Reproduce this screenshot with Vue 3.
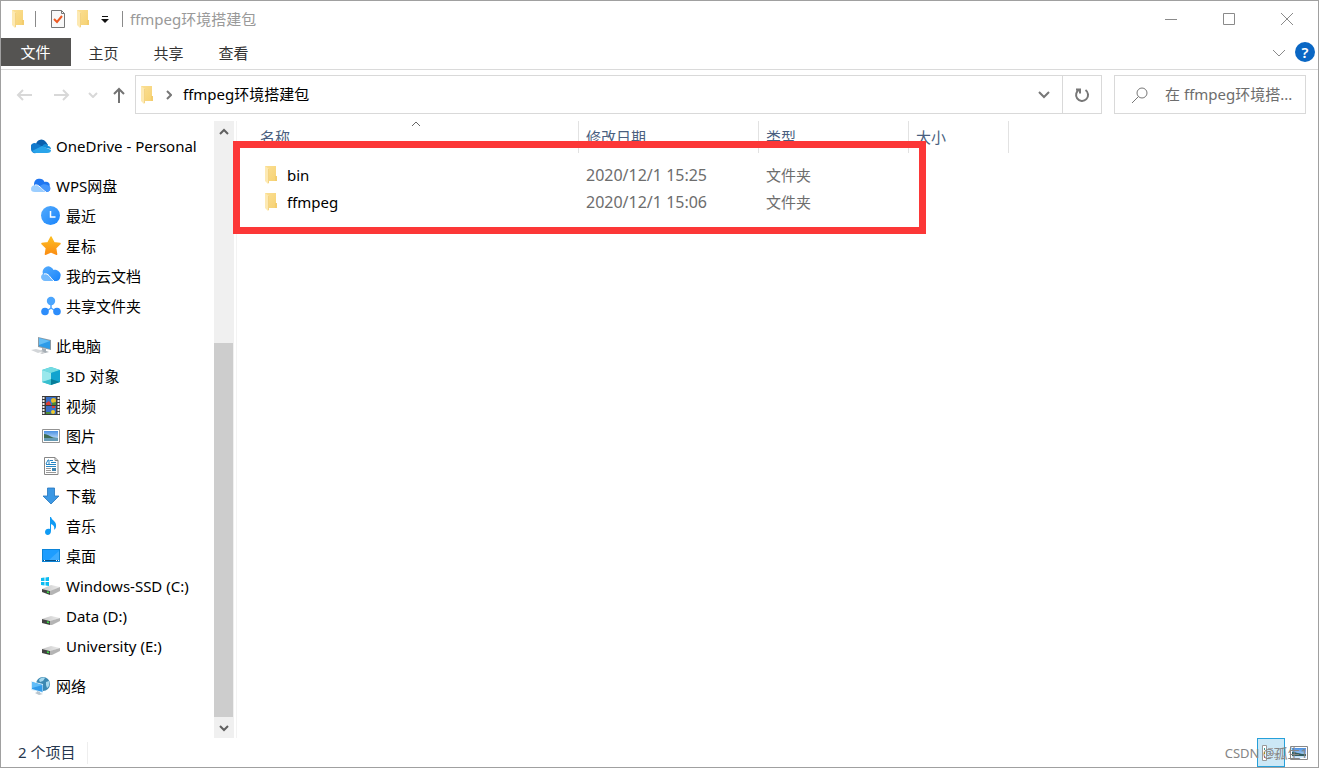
<script setup>
import { ref } from 'vue'

const folder = 'ffmpeg环境搭建包'
const search = ref('')

const tabs = ['主页', '共享', '查看']

const tree = [
  [{ icon: 'onedrive', label: 'OneDrive - Personal' }],
  [
    { icon: 'wps', label: 'WPS网盘' },
    { icon: 'recent', label: '最近', child: true },
    { icon: 'star', label: '星标', child: true },
    { icon: 'cloud', label: '我的云文档', child: true },
    { icon: 'share', label: '共享文件夹', child: true },
  ],
  [
    { icon: 'computer', label: '此电脑' },
    { icon: 'cube', label: '3D 对象', child: true },
    { icon: 'film', label: '视频', child: true },
    { icon: 'picture', label: '图片', child: true },
    { icon: 'document', label: '文档', child: true },
    { icon: 'download', label: '下载', child: true },
    { icon: 'music', label: '音乐', child: true },
    { icon: 'desktop', label: '桌面', child: true },
    { icon: 'system-drive', label: 'Windows-SSD (C:)', child: true },
    { icon: 'drive', label: 'Data (D:)', child: true },
    { icon: 'drive', label: 'University (E:)', child: true },
  ],
  [{ icon: 'network', label: '网络' }],
]

const files = [
  { name: 'bin', date: '2020/12/1 15:25', type: '文件夹' },
  { name: 'ffmpeg', date: '2020/12/1 15:06', type: '文件夹' },
]
</script>

<template>
  <div class="window">
    <svg class="sprite" aria-hidden="true">
      <defs>
        <linearGradient id="gFolder" x1="0" y1="0" x2="1" y2="1">
          <stop offset="0" stop-color="#fbdf94" /><stop offset="1" stop-color="#f6d274" />
        </linearGradient>
        <linearGradient id="gBlue" x1="0" y1="0" x2="1" y2="1">
          <stop offset="0" stop-color="#55acfd" /><stop offset="1" stop-color="#1783fb" />
        </linearGradient>
        <linearGradient id="gStar" x1="0" y1="0" x2="0" y2="1">
          <stop offset="0" stop-color="#fdbd21" /><stop offset="1" stop-color="#fb8e13" />
        </linearGradient>
        <linearGradient id="gSky" x1="0" y1="0" x2="0" y2="1">
          <stop offset="0" stop-color="#4a90e2" /><stop offset="1" stop-color="#dcefff" />
        </linearGradient>
        <linearGradient id="gDrive" x1="0" y1="0" x2="1" y2="0">
          <stop offset="0" stop-color="#c6c6c6" /><stop offset="1" stop-color="#ececec" />
        </linearGradient>
      </defs>
      <symbol id="folder" viewBox="0 0 14 18">
        <path d="M1 0h11v15H1z" fill="url(#gFolder)" />
        <path d="M11 10h2v5h-2z" fill="#f3cd6e" />
        <path d="M1 0l4 3v14l-1 1-3-3z" fill="#fde9b2" />
        <path d="M4.500 3v14" stroke="#f3d384" stroke-width="1" />
      </symbol>
      <symbol id="onedrive" viewBox="0 0 20 20">
        <path d="M5 8a5.500 5.500 0 0 1 10-2l2 3-9 4-5-4z" fill="#0a5fae" />
        <path d="M0 13a4 4 0 0 1 6-5c2 0 3 1 4 2l5 3-10 4a4 4 0 0 1-5-4z" fill="#1179cc" />
        <path d="M12 9c2-2 5-1 5 1 2 0 3 2 3 3l-9-2z" fill="#168dd9" />
        <path d="M1 15l10-5 9 4c0 2-1 3-4 3H5c-2 0-3-1-4-2z" fill="#29a4ea" />
      </symbol>
      <symbol id="wps" viewBox="0 0 20 20">
        <path d="M3 8a5.500 5.500 0 0 1 10.500-2c4-1 6 2 5 4 2 3 0 6-3 6H5z" fill="#1f76f1" />
        <path d="M9 10c3-3 8-2 10 1 1 3-1 5-4 5h-3z" fill="#4797fc" />
        <path d="M0 13c0-4 5-5 8-3l6 6H4c-3 0-4-1-4-3z" fill="#9cceff" />
        <path d="M4 9c4-1 6 4 11 7" fill="none" stroke="#fff" />
      </symbol>
      <symbol id="recent" viewBox="0 0 20 20">
        <circle cx="9.500" cy="9.500" r="9.500" fill="url(#gBlue)" />
        <path d="M9.500 5v6h5" fill="none" stroke="#fff" stroke-width="1.500" />
      </symbol>
      <symbol id="star" viewBox="0 0 20 20">
        <path d="M10 1l2.900 5.700 6.100.9-4.400 4.400 1 6.300-5.600-2.600-5.600 2.600 1-6.300L1 7.600l6.100-.9z" fill="url(#gStar)" stroke="url(#gStar)" stroke-linejoin="round" stroke-width="1.500" />
      </symbol>
      <symbol id="cloud" viewBox="0 0 20 20">
        <path d="M2 8a5.500 5.500 0 0 1 10.500-4c4-1 8 3 7 6-.5 4-2 5-5 5H6z" fill="url(#gBlue)" />
        <path d="M0 11c0-4 6-5 8-2l5 6H4c-2 0-4-2-4-4z" fill="#74bafd" />
        <path d="M3 8c5-1 5 3 10 7" fill="none" stroke="#fff" />
      </symbol>
      <symbol id="share" viewBox="0 0 20 20">
        <path d="M10 5v7l-6 4m6-4l6 4" fill="none" stroke="#4da3fc" stroke-width="1.500" />
        <circle cx="10" cy="5" r="4.200" fill="#4ba5fd" /><circle cx="4" cy="15.500" r="3.800" fill="#2d8dfb" /><circle cx="16" cy="15.500" r="3.800" fill="#2d8dfb" />
      </symbol>
      <symbol id="computer" viewBox="0 0 20 20">
        <path d="M7 1l13 3v10L7 11z" fill="#8b9aa5" /><path d="M8 2l11 3v8L8 10z" fill="#2d9be8" /><path d="M8 2l11 3-11 4z" fill="#65bef5" />
        <path d="M11 12l4 1v2l3 1-4 1-5-2 2-1z" fill="#a5adb4" />
        <path d="M0 14l5-1 8 2-6 2z" fill="#d2d5d8" /><path d="M9 17l3-1 2 1-3 1z" fill="#c5c8cb" />
      </symbol>
      <symbol id="cube" viewBox="0 0 20 20">
        <path d="M1 4l9-3 9 3v12l-9 3-9-3z" fill="#2fbdd0" />
        <path d="M1 4l9-3 9 3-9 3z" fill="#74dbe2" /><path d="M1 4l9 3v7l-9 2z" fill="#9ae8ec" /><path d="M19 4l-9 3v7l9 2z" fill="#12a3cf" />
        <path d="M1 16l9-3v6z" fill="#39bfce" /><path d="M19 16l-9-3v6z" fill="#087d99" />
      </symbol>
      <symbol id="film" viewBox="0 0 20 20">
        <path d="M1 0h18v19H1z" fill="#3a3a3a" />
        <path d="M2.500 1v18M17.500 1v18" stroke="#eee" stroke-width="2" stroke-dasharray="2 1" />
        <path d="M5 1h10v8H5zM5 10h10v8H5z" fill="#386fc6" />
        <path d="M5 7l3-2 2 3v1H5zM11 10h3v2h-3z" fill="#df3e32" /><circle cx="12.500" cy="4.500" r="2.500" fill="#e9bd28" /><circle cx="12" cy="16" r="2" fill="#f1cb2a" /><path d="M11 7l4-1v3h-4zM5 16h4l1 2H5z" fill="#4d8c34" />
      </symbol>
      <symbol id="picture" viewBox="0 0 20 20">
        <path d="M1.500 3.500h17v13h-17z" fill="#fff" stroke="#939393" /><path d="M3 5h14v10H3z" fill="url(#gSky)" />
        <path d="M3 8c5 0 6 4 14 4v1H3z" fill="#3e6c55" /><path d="M3 12h14v3H3z" fill="#669bb5" />
      </symbol>
      <symbol id="document" viewBox="0 0 20 20">
        <path d="M3.500 1.500H14l3 3v14H3.500z" fill="#fff" stroke="#878787" /><path d="M14 1.500v3h3" fill="none" stroke="#878787" />
        <path d="M5 8l2-4h1v4M9 4.500h3M10 6.500h5M5 8.500h10M5 10.500h10" fill="none" stroke="#2585c4" />
        <path d="M5 12.500h5M5 14.500h5M5 16.500h10" stroke="#999" /><path d="M11 12h4v3h-4z" fill="#4385ae" />
      </symbol>
      <symbol id="download" viewBox="0 0 20 20">
        <path d="M6.500 2h7v8H18l-8 8-8-8h4.500z" fill="#3c98e4" stroke="#2375bd" stroke-width=".8" />
      </symbol>
      <symbol id="music" viewBox="0 0 20 20">
        <path d="M9 1h1c1 4 6 4 5 10-.3 1.500-1 2-2 3 1-4-1-5-3-6v7c0 5-6 5-6 1 0-3 3-4 5-3z" fill="#109bf4" />
      </symbol>
      <symbol id="desktop" viewBox="0 0 20 20">
        <path d="M1 3h18v13H1z" fill="#0c84d8" /><path d="M2 4h16v11H2z" fill="#1d9dff" /><path d="M8 14l10-9v9z" fill="#3eacff" />
        <path d="M2 14.500h16" stroke="#064f86" /><path d="M3 14.500h1m11 0h1m1 0h1" stroke="#fff" />
      </symbol>
      <symbol id="drive" viewBox="0 0 20 20">
        <path d="M1 13l9-3 9 2-9 3z" fill="url(#gDrive)" /><path d="M1 13l8 2v4l-8-2z" fill="#424242" /><path d="M9 15l10-3v3l-8 4H9z" fill="#b4b4b4" />
        <path d="M6 16l2 .5" stroke="#3be342" stroke-width="1.500" />
      </symbol>
      <symbol id="system-drive" viewBox="0 0 20 20">
        <path d="M1 13l9-4 9 2-9 4z" fill="url(#gDrive)" /><path d="M1 13l8 2v4l-8-3z" fill="#424242" /><path d="M9 15l10-4v4l-8 4H9z" fill="#b4b4b4" />
        <path d="M6 16l2 .5" stroke="#3be342" stroke-width="1.500" />
        <path d="M0 2l3.500-.5V5H0zM4.500 1.500L8 1v4H4.500zM0 6h3.500v3.500L0 9zM4.500 6H8v4l-3.500-.5z" fill="#0cbcf2" />
      </symbol>
      <symbol id="network" viewBox="0 0 20 20">
        <circle cx="12" cy="8" r="7" fill="#3c89b3" /><path d="M8 4c1-2 4-3 6-2l-2 3-3 1zM15 6l3-1c1 3 0 6-2 7l-1-3z" fill="#a6d8ed" />
        <path d="M0 5l12 3v9L0 14z" fill="#dceffa" /><path d="M1 6l10.500 3v7L1 13z" fill="#319bea" /><path d="M1 6l10.500 3L1 12z" fill="#61bdf8" />
        <path d="M6 15l3 1v1l3 1-4 1-4-2 2-1z" fill="#b8c5ce" />
      </symbol>
    </svg>

    <header class="titlebar">
      <svg class="folder"><use href="#folder" /></svg>
      <i class="rule first"></i>
      <button class="quick check" aria-label="属性">
        <svg width="16" height="20" viewBox="0 0 16 20"><path d="M1.500 1.500h10l3 3v14h-13z" fill="#f8f8f8" stroke="#777" /><path d="M11.500 1.500v3h3" fill="none" stroke="#777" /><path d="M4 10l3 3 5-6" fill="none" stroke="#ed5a24" stroke-width="2" /></svg>
      </button>
      <button class="quick" aria-label="新建文件夹"><svg class="folder"><use href="#folder" /></svg></button>
      <button class="quick more" aria-label="自定义快速访问工具栏">
        <svg width="8" height="7" viewBox="0 0 8 7"><path d="M1 .5h6" stroke="#111" /><path d="M0 3h8L4 7z" fill="#111" /></svg>
      </button>
      <i class="rule"></i>
      <h1>{{ folder }}</h1>
      <div class="captions">
        <button aria-label="最小化"><svg width="14" height="14"><path d="M1 7.500h12" /></svg></button>
        <button aria-label="最大化"><svg width="14" height="14"><path d="M1.500 1.500h11v11h-11z" /></svg></button>
        <button aria-label="关闭"><svg width="14" height="14"><path d="M1 1l12 12M13 1L1 13" /></svg></button>
      </div>
    </header>

    <nav class="ribbon">
      <button class="file">文件</button>
      <button v-for="t in tabs" :key="t">{{ t }}</button>
      <button class="expand" aria-label="展开功能区"><svg width="14" height="8"><path d="M1 1l6 6 6-6" /></svg></button>
      <button class="help" aria-label="帮助">?</button>
    </nav>

    <div class="address-row">
      <div class="arrows">
        <button aria-label="后退" disabled><svg width="16" height="14" viewBox="0 0 16 14"><path d="M16 7H2M7 2L2 7l5 5" /></svg></button>
        <button aria-label="前进" disabled><svg width="16" height="14" viewBox="0 0 16 14"><path d="M0 7h14M9 2l5 5-5 5" /></svg></button>
        <button class="history" aria-label="最近浏览的位置" disabled><svg width="10" height="6" viewBox="0 0 10 6"><path d="M1 1l4 4 4-4" /></svg></button>
        <button class="up" aria-label="上移"><svg width="14" height="16" viewBox="0 0 14 16"><path d="M7 16V2M2 7l5-5 5 5" /></svg></button>
      </div>
      <div class="address">
        <svg class="folder"><use href="#folder" /></svg>
        <svg class="crumb" width="6" height="10" viewBox="0 0 6 10"><path d="M1 1l4 4-4 4" /></svg>
        <a href="#">{{ folder }}</a>
        <button class="drop" aria-label="以前的位置"><svg width="12" height="8" viewBox="0 0 12 8"><path d="M1 1l5 5 5-5" /></svg></button>
        <button class="refresh" aria-label="刷新"><svg width="16" height="16" viewBox="0 0 16 16"><path d="M11.500 3a6 6 0 1 1-6-.5M2 2.500h4v4" /></svg></button>
      </div>
      <label class="search">
        <svg width="18" height="18" viewBox="0 0 18 18"><circle cx="11" cy="7" r="5" /><path d="M7.500 10.500L1 17" /></svg>
        <input v-model="search" type="text" :placeholder="`在 ${folder.slice(0, 9)}...`" aria-label="搜索">
      </label>
    </div>

    <main>
      <nav class="tree" aria-label="导航窗格">
        <ul v-for="(group, g) in tree" :key="g">
          <li v-for="n in group" :key="n.label">
            <a href="#" :class="{ child: n.child }"><svg class="icon"><use :href="`#${n.icon}`" /></svg>{{ n.label }}</a>
          </li>
        </ul>
      </nav>
      <div class="scrollbar">
        <button aria-label="向上滚动"><svg width="12" height="8" viewBox="0 0 12 8"><path d="M2 6l4-4 4 4" /></svg></button>
        <div class="track"><div class="thumb"></div></div>
        <button aria-label="向下滚动"><svg width="12" height="8" viewBox="0 0 12 8"><path d="M2 2l4 4 4-4" /></svg></button>
      </div>
      <section class="list">
        <table>
          <colgroup><col class="c-name"><col class="c-date"><col class="c-type"><col class="c-size"><col></colgroup>
          <thead>
            <tr>
              <th>名称<svg class="sort" width="10" height="6" viewBox="0 0 10 6"><path d="M1 5l4-4 4 4" /></svg></th>
              <th>修改日期</th>
              <th>类型</th>
              <th>大小</th>
              <td></td>
            </tr>
          </thead>
          <tbody>
            <tr v-for="f in files" :key="f.name">
              <td><a href="#"><svg class="folder"><use href="#folder" /></svg>{{ f.name }}</a></td>
              <td>{{ f.date }}</td>
              <td>{{ f.type }}</td>
              <td></td>
              <td></td>
            </tr>
          </tbody>
        </table>
        <div class="highlight"></div>
      </section>
    </main>

    <footer>
      <span class="count">{{ files.length }} 个项目</span>
      <div class="views">
        <button class="active" aria-label="详细信息">
          <svg width="18" height="16" viewBox="0 0 18 16"><path d="M.5.5h4v15h-4z" fill="#fff" stroke="#999" /><path d="M2 4h1" stroke="#399" stroke-width="2" /><path d="M2 8h1" stroke="#d90" stroke-width="2" /><path d="M2 12h1" stroke="#c33" stroke-width="2" /><path d="M6 3.500h5m1 0h5M6 8.500h5m1 0h5M6 12.500h5m1 0h5" stroke="#aaa" /></svg>
        </button>
        <button aria-label="大缩略图">
          <svg width="18" height="14" viewBox="0 0 18 14"><path d="M.5.5h17v13H.5z" fill="#fff" stroke="#888" /><path d="M2 2h14v10H2z" fill="url(#gSky)" /><path d="M2 6c5 0 6 2 14 2v2H2z" fill="#335d60" /></svg>
        </button>
      </div>
      <span class="watermark">CSDN @孤生1</span>
    </footer>
  </div>
</template>

<style>
body {
  margin: 0;
}
</style>

<style scoped>
.window {
  box-sizing: border-box;
  min-height: 100vh;
  display: flex;
  flex-direction: column;
  border: 1px solid #a0a0a0;
  background: #fff;
  color: #000;
  font: 15px/20px "Noto Sans", "Noto Sans CJK SC", sans-serif;
}
.sprite {
  position: absolute;
  width: 0;
  height: 0;
}
button {
  display: flex;
  align-items: center;
  justify-content: center;
  padding: 0;
  border: 0;
  background: none;
  color: inherit;
  font: inherit;
}
svg {
  display: block;
  flex: none;
}
a {
  color: inherit;
  text-decoration: none;
}
.folder {
  width: 14px;
  height: 18px;
}
.titlebar {
  box-sizing: border-box;
  display: flex;
  align-items: center;
  height: 37px;
  padding: 0 2px 1px 10px;
}
.rule {
  width: 1px;
  height: 16px;
  background: #8a8a8a;
}
.rule.first {
  margin: 0 14px 0 10px;
}
.quick {
  margin-right: 10px;
}
.more {
  margin: 0 13px 0 1px;
}
h1 {
  flex: 1;
  margin: 0 0 0 7px;
  padding-bottom: 1px;
  color: #999;
  font-size: 15px;
  font-weight: 400;
}
.captions {
  display: flex;
}
.captions button {
  width: 58px;
  height: 36px;
}
.captions svg,
.expand svg {
  fill: none;
  stroke: #8a8a8a;
}
.ribbon {
  display: flex;
  height: 31px;
  border-bottom: 1px solid #dadada;
}
.ribbon button {
  width: 65px;
  height: 30px;
  color: #333;
}
.ribbon .file {
  width: 69px;
  height: 28px;
  padding-right: 1px;
  box-sizing: content-box;
  background: #555452;
  color: #fff;
}
.ribbon .expand {
  width: 28px;
  margin-left: auto;
}
.ribbon .help {
  width: 20px;
  height: 20px;
  margin: 4px 3px 0 2px;
  border-radius: 10px;
  background: #0a67c4;
  color: #fff;
  font-weight: 600;
}
.address-row {
  display: flex;
  height: 39px;
  margin: 5px 12px 0 0;
}
.arrows {
  display: flex;
  align-items: center;
  width: 134px;
}
.arrows button {
  width: 38px;
}
.arrows button:first-child {
  margin-left: 4px;
}
.arrows .history {
  width: 24px;
}
.arrows .up {
  width: 28px;
}
.arrows svg {
  fill: none;
  stroke: #d8d8d8;
  stroke-width: 2;
}
.arrows .up svg {
  stroke: #737373;
}
.address {
  box-sizing: border-box;
  flex: 1;
  display: flex;
  align-items: center;
  padding-left: 4px;
  border: 1px solid #d9d9d9;
}
.address a {
  padding-bottom: 2px;
}
.crumb {
  margin: 0 11px 0 12px;
}
.crumb,
.drop svg,
.refresh svg {
  fill: none;
  stroke: #777;
  stroke-width: 2;
}
.drop {
  width: 37px;
  height: 37px;
  margin-left: auto;
}
.refresh {
  width: 39px;
  height: 37px;
  border-left: 1px solid #d9d9d9;
}
.search {
  box-sizing: border-box;
  display: flex;
  align-items: center;
  width: 192px;
  margin-left: 12px;
  padding-left: 16px;
  border: 1px solid #d9d9d9;
}
.search svg {
  fill: none;
  stroke: #777;
}
.search input {
  flex: 1;
  min-width: 0;
  margin-left: 16px;
  padding: 0 0 2px;
  border: 0;
  outline: 0;
  background: none;
  font: inherit;
}
.search input::placeholder {
  color: #6d6d6d;
  opacity: 1;
}
main {
  flex: 1;
  display: flex;
  margin-top: 7px;
}
.tree {
  width: 213px;
  padding-top: 10px;
}
.tree ul {
  margin: 0 0 10px;
  padding: 0;
  list-style: none;
}
.tree a {
  display: flex;
  align-items: center;
  gap: 5px;
  height: 30px;
  padding-left: 30px;
  white-space: nowrap;
}
.tree .child {
  padding-left: 40px;
}
.icon {
  width: 20px;
  height: 20px;
}
.scrollbar {
  display: flex;
  flex-direction: column;
  width: 20px;
  background: #f0f0f0;
}
.scrollbar button {
  width: 19px;
  height: 21px;
}
.scrollbar svg {
  fill: none;
  stroke: #606060;
  stroke-width: 2;
}
.track {
  flex: 1;
  display: flex;
  align-items: flex-end;
}
.thumb {
  width: 19px;
  height: 65%;
  background: #cdcdcd;
}
.list {
  position: relative;
  flex: 1;
  margin-left: 2px;
  border-left: 1px solid #f3f3f3;
}
table {
  width: 100%;
  table-layout: fixed;
  border-collapse: separate;
  border-spacing: 0;
}
.c-name {
  width: 342px;
}
.c-date {
  width: 180px;
}
.c-type {
  width: 150px;
}
.c-size {
  width: 100px;
}
th {
  position: relative;
  box-sizing: border-box;
  height: 32px;
  padding: 0 0 0 7px;
  border-right: 1px solid #e2e2e2;
  color: #4a5f80;
  font-weight: 400;
  text-align: left;
}
th:first-child {
  padding-left: 23px;
}
.sort {
  position: absolute;
  top: 0;
  left: 51%;
  fill: none;
  stroke: #666;
}
tbody td {
  height: 27px;
  padding: 0 0 0 7px;
  color: #6d6d6d;
}
tbody tr:first-child td {
  height: 35px;
  padding-top: 8px;
  box-sizing: border-box;
}
tbody td:first-child {
  padding-left: 27px;
  color: #000;
}
tbody td:nth-child(2) {
  font-size: 16px;
}
tbody a {
  display: flex;
  align-items: center;
  gap: 9px;
}
.highlight {
  position: absolute;
  top: 20px;
  left: -4px;
  box-sizing: border-box;
  width: 693px;
  height: 93px;
  border: 7px solid #fc3737;
}
footer {
  position: relative;
  display: flex;
  align-items: center;
  height: 29px;
  color: #26374f;
}
.count {
  padding: 0 12px 2px 17px;
  border-right: 1px solid #eee;
}
.views {
  display: flex;
  margin: 0 5px 0 auto;
}
.views button {
  box-sizing: border-box;
  width: 28px;
  height: 29px;
}
.views .active {
  border: 1px solid #26a0da;
  background: #cce8f6;
}
.watermark {
  position: absolute;
  right: 10px;
  color: #858585;
  font-size: 13px;
}
</style>
